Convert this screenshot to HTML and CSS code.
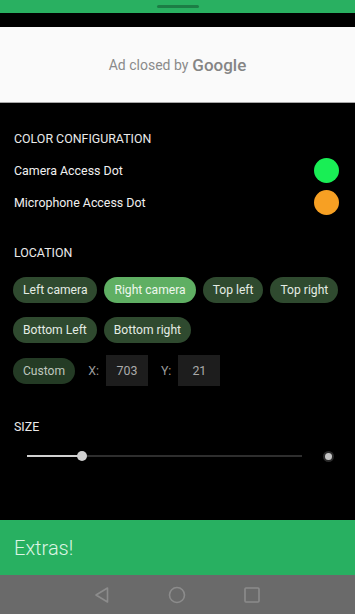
FILE: index.html
```html
<!DOCTYPE html>
<html>
<head>
<meta charset="utf-8">
<link rel="stylesheet" href="styles.css">
</head>
<body>
<div class="screen">
  <div class="topbar"><div class="handle"></div></div>
  <div class="spacer"></div>
  <div class="ad"><span class="ad-text">Ad closed by</span><span class="google">Google</span></div>
  <main class="content">
    <h2 class="title">COLOR CONFIGURATION</h2>
    <div class="row"><span>Camera Access Dot</span><span class="dot dot-green"></span></div>
    <div class="row"><span>Microphone Access Dot</span><span class="dot dot-orange"></span></div>

    <h2 class="title title-loc">LOCATION</h2>
    <div class="chips">
      <span class="chip">Left camera</span>
      <span class="chip chip-on">Right camera</span>
      <span class="chip">Top left</span>
      <span class="chip">Top right</span>
    </div>
    <div class="chips chips-2">
      <span class="chip">Bottom Left</span>
      <span class="chip">Bottom right</span>
    </div>
    <div class="custom-row">
      <span class="chip chip-dim">Custom</span>
      <span class="lbl">X:</span><span class="box">703</span>
      <span class="lbl">Y:</span><span class="box">21</span>
    </div>

    <h2 class="title title-size">SIZE</h2>
    <div class="slider">
      <div class="track"><div class="fill"></div><div class="thumb"></div></div>
      <div class="end-dot"></div>
    </div>
  </main>
  <div class="extras">Extras!</div>
  <nav class="navbar">
    <svg width="18" height="18" viewBox="0 0 18 18"><path d="M14.5 2 L3 9 L14.5 16 Z" fill="none" stroke="#8c8c8c" stroke-width="1.6" stroke-linejoin="round"/></svg>
    <svg width="18" height="18" viewBox="0 0 18 18"><circle cx="9" cy="9" r="7.5" fill="none" stroke="#8c8c8c" stroke-width="1.6"/></svg>
    <svg width="18" height="18" viewBox="0 0 18 18"><rect x="2" y="2" width="14" height="14" rx="1" fill="none" stroke="#8c8c8c" stroke-width="1.6"/></svg>
  </nav>
</div>
</body>
</html>
```
FILE: styles.css
```css
* { box-sizing: border-box; }
html, body { margin: 0; padding: 0; background: #000; }
body { font-family: Roboto, "Noto Sans", sans-serif; }
.screen { width: 355px; height: 614px; display: flex; flex-direction: column; background: #000; overflow: hidden; }
.topbar { height: 13px; background: #29b061; display: flex; justify-content: center; align-items: center; }
.handle { width: 42px; height: 3px; border-radius: 2px; background: #1c7d45; }
.spacer { height: 14px; }
.ad { height: 76px; background: #fafafa; border-bottom: 1px solid #a8a8a8; display: flex; justify-content: center; align-items: center; gap: 4px; padding-top: 1px; }
.ad-text { font-size: 14px; color: #8a8a8a; }
.google { font-size: 17px; font-weight: 500; color: #858585; letter-spacing: 0; }
.content { flex: 1; padding: 28px 16px 0 14px; color: #eee; }
.title { margin: 0; font-size: 12.4px; font-weight: 400; line-height: 16px; color: #eaeaea; }
.row { height: 32px; display: flex; justify-content: space-between; align-items: center; font-size: 12.4px; color: #f0f0f0; }
.title + .row { margin-top: 7px; }
.dot { width: 25px; height: 25px; border-radius: 50%; }
.dot-green { background: #19ee55; }
.dot-orange { background: #f7a023; }
.title-loc { margin-top: 27px; }
.chips { display: flex; gap: 7px; margin-top: 16px; margin-left: -1px; }
.chips-2 { margin-top: 14px; }
.chip { height: 26px; border-radius: 13px; padding: 0 10px; background: #2f4a2f; color: #e4ece4; font-size: 12.1px; display: inline-flex; align-items: center; white-space: nowrap; }
.chip-on { background: #5faf63; color: #eef7ee; }
.chip-dim { background: #243b25; color: #bfc7bf; }
.custom-row { display: flex; align-items: center; margin-top: 12px; height: 31px; margin-left: -1px; }
.lbl { font-size: 12.4px; color: #9a9a9a; margin: 0 7px 0 13px; }
.box { width: 42px; height: 31px; background: #1d1d1d; color: #aaa; font-size: 12.4px; display: flex; align-items: center; justify-content: center; }
.title-size { margin-top: 33px; }
.slider { display: flex; align-items: center; height: 20px; margin-top: 11px; padding-left: 13px; }
.track { position: relative; width: 275px; height: 2px; background: #2e2e2e; }
.fill { width: 55px; height: 2px; background: #d0d0d0; }
.thumb { position: absolute; left: 50px; top: -4px; width: 10px; height: 10px; border-radius: 50%; background: #cfcfcf; }
.end-dot { width: 7px; height: 7px; border-radius: 50%; background: #c4c4c4; margin-left: 23px; box-shadow: 0 0 0 2px #2a2a2a; }
.extras { height: 55px; background: #28b061; color: #dcf5e4; font-size: 20px; font-weight: 300; display: flex; align-items: center; padding-left: 14px; }
.navbar { height: 39px; background: #6a6a6a; display: flex; justify-content: center; align-items: center; gap: 57px; padding-right: 1px; }
```
